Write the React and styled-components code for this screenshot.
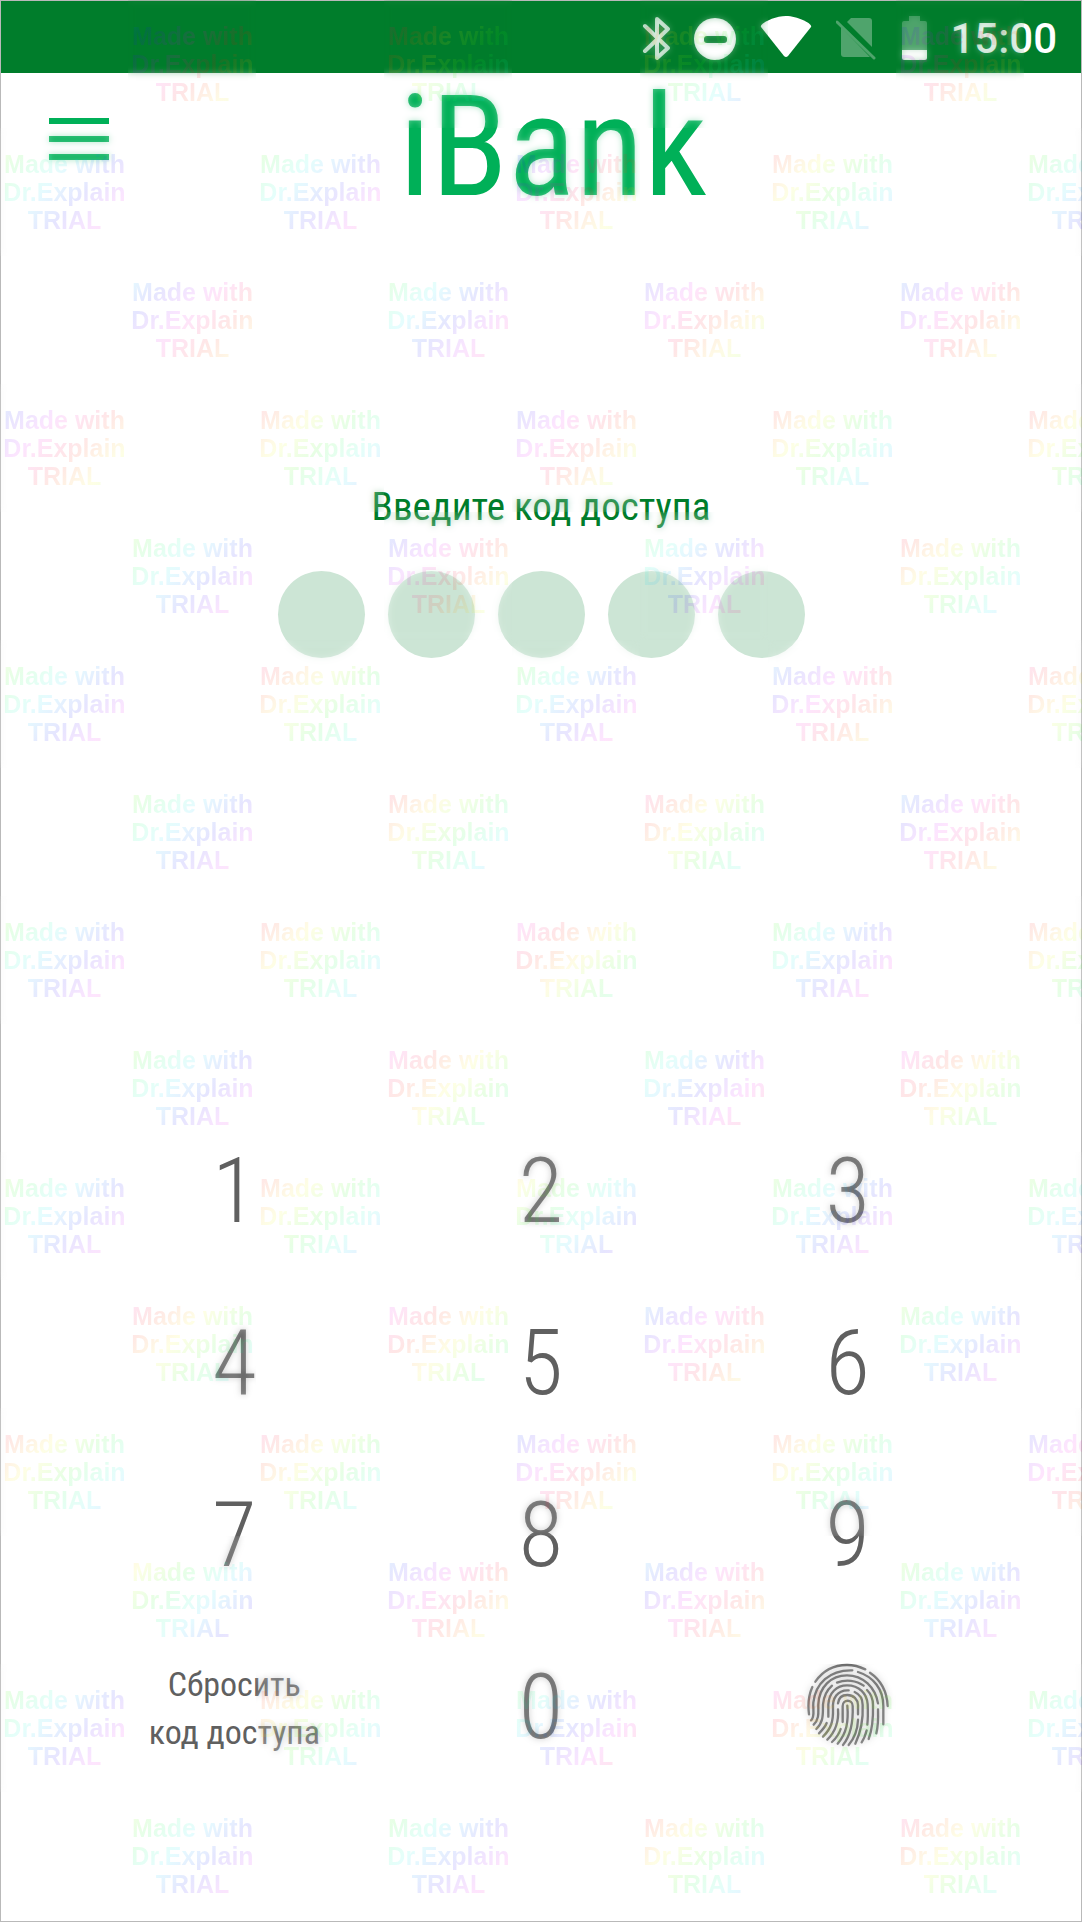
import React from 'react';
import styled, { createGlobalStyle } from 'styled-components';

const colors = {
  bar: '#007d2b',
  brand: '#00b058',
  ink: '#606060',
  dot: '#cce5d5',
  paper: '#ffffff',
  frame: '#b9b9b9',
};

const GlobalStyle = createGlobalStyle`
  *, *::before, *::after { box-sizing: border-box; }
  body {
    margin: 0;
    background: ${colors.paper};
    font-family: "Roboto Condensed", Roboto, sans-serif;
  }
`;

const Screen = styled.div`
  position: relative;
  min-height: 100vh;
  border: 1px solid ${colors.frame};
  background: ${colors.paper};
`;

const StatusBar = styled.div`
  display: flex;
  align-items: center;
  justify-content: flex-end;
  gap: 22px;
  height: 72px;
  padding: 3px 24px 0 0;
  background: ${colors.bar};
  color: #fff;
`;

const IconGroup = styled.div`
  display: flex;
  gap: 24px;
`;

const StatusIcon = styled.svg`
  flex: none;
  width: ${(p) => p.$width}px;
  height: 48px;
`;

const Clock = styled.time`
  font: 500 42px/48px Roboto, sans-serif;
`;

const Header = styled.header`
  display: flex;
  align-items: flex-start;
  padding: 0 84px 0 48px;
`;

const MenuButton = styled.button`
  flex: none;
  display: block;
  margin-top: 45px;
  padding: 0;
  border: 0;
  background: none;
  color: ${colors.brand};
`;

const Brand = styled.h1`
  flex: 1;
  margin: 0;
  color: ${colors.brand};
  font-size: 141px;
  font-weight: 400;
  line-height: 148px;
  text-align: center;
`;

const Passcode = styled.section`
  display: flex;
  flex-direction: column;
  align-items: center;
  gap: 40px;
  padding-top: 262px;
`;

const Prompt = styled.h2`
  margin: 0;
  color: ${colors.bar};
  font-size: 39px;
  font-weight: 400;
  line-height: 48px;
`;

const Dots = styled.div`
  display: flex;
  gap: 23px;
`;

const Dot = styled.span`
  width: 87px;
  height: 87px;
  border-radius: 50%;
  background: ${colors.dot};
`;

const Keypad = styled.section`
  display: grid;
  grid-template-columns: repeat(3, 1fr);
  grid-auto-rows: 172px;
  margin-top: 445px;
  padding: 0 80px;
`;

const Key = styled.button`
  display: flex;
  align-items: center;
  justify-content: center;
  padding: 4px 0 0;
  border: 0;
  background: none;
  color: ${colors.ink};
  font-family: inherit;
  font-size: 91px;
  font-weight: 300;
  line-height: 108px;
`;

const IconKey = styled(Key)`
  padding: 0;
`;

const TextKey = styled(Key)`
  padding-top: 6px;
  font-size: 34px;
  font-weight: 400;
  line-height: 48px;
`;

const Watermark = styled.div`
  position: absolute;
  inset: -1px;
  overflow: hidden;
  pointer-events: none;
`;

const WatermarkRow = styled.div`
  display: flex;
  gap: 128px;
  padding-left: ${(p) => (p.$shifted ? 128 : 0)}px;
`;

const Tile = styled.div`
  position: relative;
  flex: none;
  width: 128px;
  height: 128px;

  &::before {
    content: '';
    position: absolute;
    inset: 0;
    backdrop-filter: blur(3px);
    opacity: 0.32;
  }
`;

const rainbow = (start) => {
  const stops = Array.from({ length: 13 }, (_, i) => {
    const hue = (start + 310 + Math.round((310 * i) / 12)) % 360;
    return `hsla(${hue}, 100%, 50%, 0.1)`;
  });
  return `linear-gradient(135deg, ${stops.join(', ')})`;
};

const TileText = styled.p`
  position: relative;
  height: 128px;
  margin: 0;
  padding: 22px 0 0 1px;
  background: ${(p) => rainbow(p.$hue)};
  background-clip: text;
  -webkit-background-clip: text;
  color: transparent;
  font: 700 25px/28px "Liberation Sans", Arial, sans-serif;
  text-align: center;
  white-space: nowrap;
`;

const hueRows = [
  [230, 345, 20, 250],
  [110, 120, 240, 10, 110],
  [210, 130, 250, 230],
  [240, 10, 245, 10, 5],
  [110, 240, 140, 0],
  [110, 350, 120, 220, 345],
  [110, 0, 340, 220],
  [115, 5, 310, 120, 10],
  [110, 315, 140, 310],
  [105, 10, 60, 110, 110],
  [340, 310, 220, 105],
  [5, 345, 240, 10, 250],
  [60, 230, 215, 105],
  [115, 10, 140, 325, 120],
  [105, 120, 5, 340],
];

const ridges = [
  'M108 122C130 90 165 72 203 72C223 72 241 77 258 85',
  'M272 95C303 116 323 152 325 195',
  'M99 138C89 160 85 190 89 220',
  'M95 238C108 228 100 205 102 185C108 128 150 86 219 88',
  'M236 93C282 107 312 145 312 195V250',
  'M103 251C122 232 116 210 117 190C119 138 155 103 203 103C252 103 288 140 296 187',
  'M296 205C297 235 296 258 291 277',
  'M111 264C135 240 130 215 131 190C133 168 142 148 158 134',
  'M173 125C200 114 231 118 253 134',
  'M263 147C276 160 281 175 281 192C282 230 280 262 268 294',
  'M147 227V190C149 155 172 133 203 133C240 133 263 158 265 190C266 213 266 232 264 251',
  'M119 277C130 266 138 257 142 246',
  'M131 287C156 262 162 240 161 205C158 172 174 146 208 148',
  'M226 153C243 161 250 175 250 192C252 236 247 268 228 308',
  'M176 187C178 171 189 162 204 162C223 162 235 175 236 192V220',
  'M176 205C179 242 170 270 144 296',
  'M190 243V195C190 174 220 174 220 195C222 246 215 282 191 312',
  'M204 194C208 242 202 276 175 308',
  'M184 264C178 282 169 293 158 303',
  'M236 236C235 268 226 290 208 312',
  'M262 268C258 284 254 294 247 304',
];

const Fingerprint = () => (
  <svg width="84" height="84" viewBox="80 66 252 252" fill="none" aria-hidden="true">
    <g stroke="currentColor" strokeWidth="7" strokeLinecap="round">
      {ridges.map((d) => (
        <path key={d} d={d} />
      ))}
    </g>
  </svg>
);

const StatusIcons = () => (
  <IconGroup>
    <StatusIcon $width={28} viewBox="0 0 28 48" fill="none" aria-label="Bluetooth">
      <path
        d="M3 11L26 33L15 43V4L26 14L3 36"
        stroke="#fff"
        strokeOpacity="0.9"
        strokeWidth="4"
        strokeLinecap="round"
        strokeLinejoin="round"
      />
    </StatusIcon>
    <StatusIcon $width={42} viewBox="0 0 42 48" aria-label="Не беспокоить">
      <circle cx="21" cy="24" r="21" fill="#fff" />
      <rect x="10" y="21" width="23" height="7" rx="3" fill={colors.bar} />
    </StatusIcon>
    <StatusIcon $width={52} viewBox="0 0 52 48" aria-label="Wi-Fi">
      <path d="M1 12C-1 9 14 1 26 1S53 9 51 12L28 41Q26 43 24 41Z" fill="#fff" />
    </StatusIcon>
    <StatusIcon $width={40} viewBox="0 0 40 48" aria-label="Нет SIM-карты">
      <g fill="#4fa46c">
        <path d="M15 3H33Q36 3 36 6V32L11 7Z" />
        <path d="M5 12L34 42H8Q5 42 5 39Z" />
        <path d="M1 7L38 43" stroke="#4fa46c" strokeWidth="3" strokeLinecap="round" />
      </g>
    </StatusIcon>
    <StatusIcon $width={28} viewBox="0 0 28 48" aria-label="Батарея">
      <path d="M9 1H20V6H25Q27 6 27 8V35H2V8Q2 6 4 6H9Z" fill="#4fa46c" />
      <path d="M2 35H27V43Q27 45 25 45H4Q2 45 2 43Z" fill="#fff" />
    </StatusIcon>
  </IconGroup>
);

export default function App() {
  return (
    <>
      <GlobalStyle />
      <Screen>
        <StatusBar>
          <StatusIcons />
          <Clock>15:00</Clock>
        </StatusBar>

        <Header>
          <MenuButton type="button" aria-label="Меню">
            <svg width="60" height="42" viewBox="0 0 60 42" display="block" fill="currentColor">
              <path d="M0 0H60V6H0ZM0 18H60V24H0ZM0 36H60V42H0Z" />
            </svg>
          </MenuButton>
          <Brand>iBank</Brand>
        </Header>

        <main>
          <Passcode>
            <Prompt>Введите код доступа</Prompt>
            <Dots>
              {[1, 2, 3, 4, 5].map((n) => (
                <Dot key={n} />
              ))}
            </Dots>
          </Passcode>

          <Keypad>
            {[1, 2, 3, 4, 5, 6, 7, 8, 9].map((n) => (
              <Key key={n} type="button">{n}</Key>
            ))}
            <TextKey type="button">
              Сбросить
              <br />
              код доступа
            </TextKey>
            <Key type="button">0</Key>
            <IconKey type="button" aria-label="Отпечаток пальца">
              <Fingerprint />
            </IconKey>
          </Keypad>
        </main>

        <Watermark aria-hidden="true">
          {hueRows.map((hues, row) => (
            <WatermarkRow key={row} $shifted={row % 2 === 0}>
              {hues.map((hue, col) => (
                <Tile key={col}>
                  <TileText $hue={hue}>
                    Made with
                    <br />
                    Dr.Explain
                    <br />
                    TRIAL
                  </TileText>
                </Tile>
              ))}
            </WatermarkRow>
          ))}
        </Watermark>
      </Screen>
    </>
  );
}
